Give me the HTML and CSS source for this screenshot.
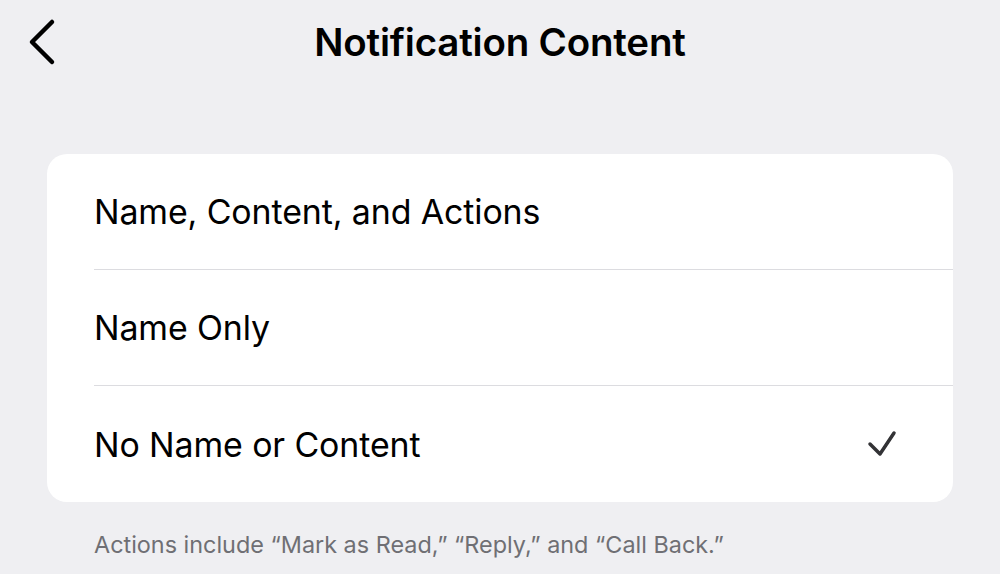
FILE: index.html
```html
<!DOCTYPE html>
<html>
<head>
<meta charset="utf-8">
<link rel="stylesheet" href="styles.css">
</head>
<body>
<div class="screen">
  <header class="nav">
    <button class="back" aria-label="Back">
      <svg width="40" height="60" viewBox="0 0 40 60"><path d="M24 12 L4 32 L24 52" fill="none" stroke="#000" stroke-width="4.5" stroke-linecap="round" stroke-linejoin="round"/></svg>
    </button>
    <h1 class="title">Notification Content</h1>
  </header>
  <main class="content">
    <ul class="card">
      <li class="row"><span class="label">Name, Content, and Actions</span></li>
      <li class="row"><span class="label">Name Only</span></li>
      <li class="row"><span class="label">No Name or Content</span>
        <svg class="check" width="32" height="32" viewBox="0 0 32 32"><path d="M4 16 L14 26 L28 5" fill="none" stroke="#333336" stroke-width="3.5" stroke-linecap="round" stroke-linejoin="round"/></svg>
      </li>
    </ul>
    <p class="footnote">Actions include “Mark as Read,” “Reply,” and “Call Back.”</p>
  </main>
</div>
</body>
</html>
```

FILE: styles.css
```css
html, body {
  margin: 0;
  padding: 0;
  background: #efeff2;
}
body {
  font-family: Inter, "Noto Sans", "Liberation Sans", sans-serif;
  color: #000;
}
.screen {
  width: 1000px;
  height: 574px;
  overflow: hidden;
}
.nav {
  position: relative;
  height: 84px;
  display: flex;
  align-items: center;
  justify-content: center;
}
.back {
  position: absolute;
  left: 28px;
  top: 10px;
  padding: 0;
  border: 0;
  background: none;
  width: 40px;
  height: 60px;
}
.back svg { display: block; }
.title {
  margin: 0;
  font-size: 38.5px;
  font-weight: 600;
  letter-spacing: -0.2px;
}
.content {
  padding: 70px 47px 0;
}
.card {
  list-style: none;
  margin: 0;
  padding: 0;
  background: #fff;
  border-radius: 20px;
  overflow: hidden;
}
.row {
  height: 116px;
  margin-left: 47px;
  padding-right: 55px;
  display: flex;
  align-items: center;
  justify-content: space-between;
  box-sizing: border-box;
  border-bottom: 1.5px solid #dcdce0;
}
.row:last-child { border-bottom: 0; }
.label {
  font-size: 33.9px;
  font-weight: 400;
  letter-spacing: -0.1px;
}
.check { display: block; }
.footnote {
  margin: 28px 0 0 47px;
  font-size: 23.4px;
  color: #6f6f74;
  letter-spacing: 0;
}
```
